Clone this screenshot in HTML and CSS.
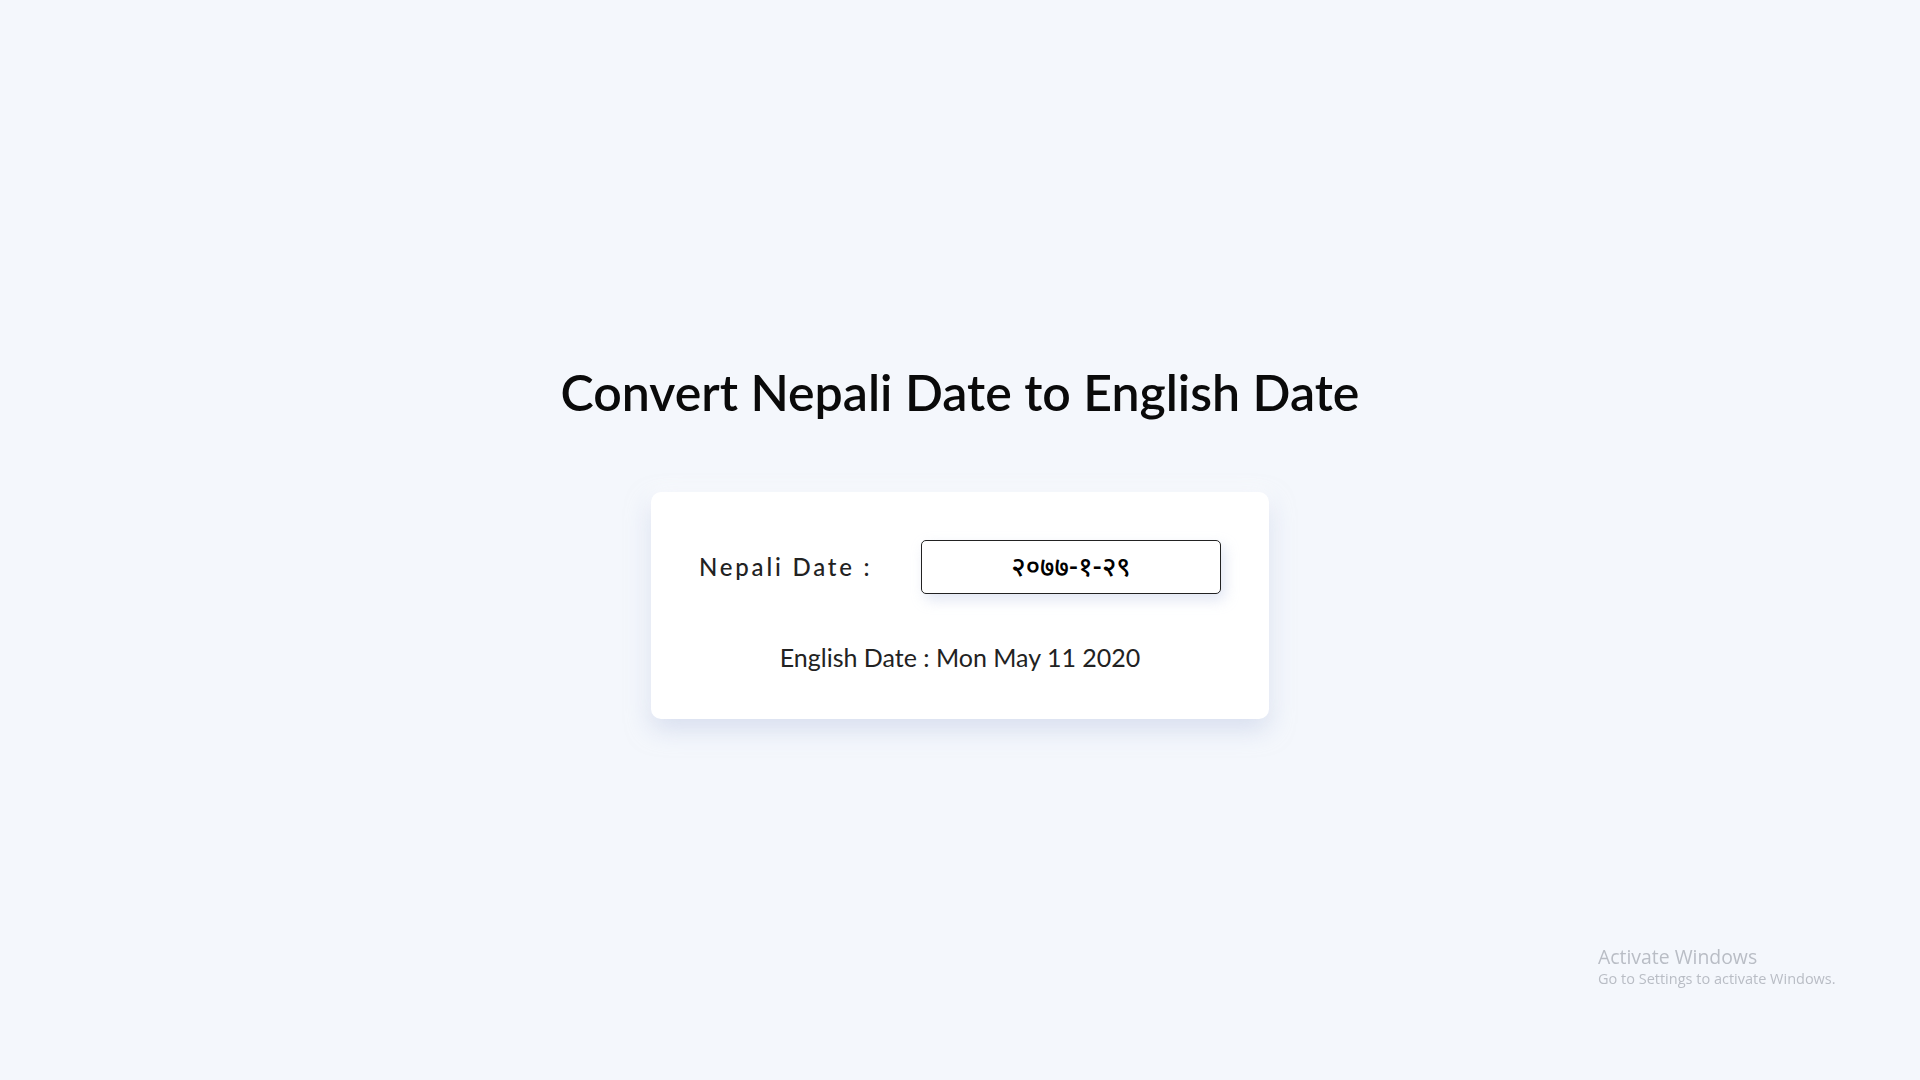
FILE: index.html
```html
<!DOCTYPE html>
<html lang="en">
<head>
<meta charset="utf-8">
<title>Convert Nepali Date to English Date</title>
<link rel="stylesheet" href="styles.css">
</head>
<body>
<main class="page">
  <h1 class="title">Convert Nepali Date to English Date</h1>
  <section class="card">
    <div class="row">
      <label class="label" for="npdate">Nepali Date :</label>
      <input class="date-input" id="npdate" type="text" value="२०७७-१-२९">
    </div>
    <p class="result">English Date : Mon May 11 2020</p>
  </section>
</main>
<div class="watermark">
  <div class="wm-title">Activate Windows</div>
  <div class="wm-sub">Go to Settings to activate Windows.</div>
</div>
</body>
</html>
```
FILE: styles.css
```css
html, body {
  margin: 0;
  padding: 0;
}
body {
  background: #f4f7fc;
  font-family: Lato, "Noto Sans", sans-serif;
  color: #111;
}
.page {
  height: 100vh;
  display: flex;
  flex-direction: column;
  align-items: center;
  justify-content: center;
}
.title {
  margin: 0 0 70px 0;
  font-size: 50px;
  font-weight: 600;
  line-height: 60px;
  color: #0a0a0a;
}
.card {
  width: 618px;
  box-sizing: border-box;
  background: #fff;
  border-radius: 10px;
  padding: 48px 48px 46px 48px;
  box-shadow: 0 10px 24px rgba(190, 200, 228, 0.55), 0 -4px 18px rgba(255, 255, 255, 0.9);
}
.row {
  display: flex;
  align-items: center;
  justify-content: space-between;
}
.label {
  font-size: 24px;
  letter-spacing: 2.8px;
  color: #222;
  font-weight: 500;
}
.date-input {
  width: 300px;
  height: 54px;
  box-sizing: border-box;
  padding: 5px 0 0 0;
  border: 1.5px solid #222;
  border-radius: 5px;
  background: #fff;
  text-align: center;
  font-family: "Noto Sans Devanagari", "Noto Sans", "Lohit Devanagari", sans-serif;
  font-size: 27px;
  font-weight: 500;
  color: #000;
  box-shadow: 4px 6px 14px rgba(180, 192, 225, 0.4);
  outline: none;
}
.result {
  margin: 48px 0 0 0;
  text-align: center;
  font-size: 25px;
  line-height: 31px;
  color: #222;
}
.watermark {
  position: fixed;
  left: 1598px;
  top: 944px;
  color: #b9bdc5;
  font-family: "Open Sans", "Noto Sans", sans-serif;
}
.wm-title {
  font-size: 19.4px;
  line-height: 25px;
}
.wm-sub {
  font-size: 14.5px;
  line-height: 20px;
}
```
